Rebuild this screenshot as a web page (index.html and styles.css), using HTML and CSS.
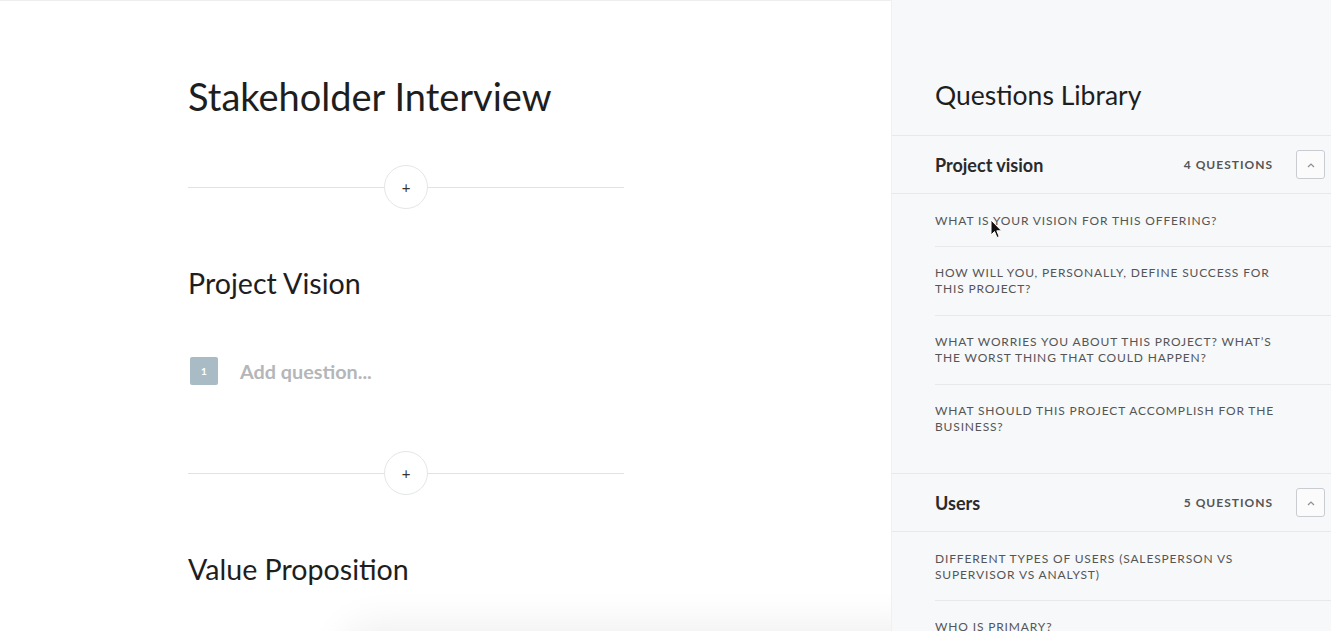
FILE: index.html
```html
<!DOCTYPE html>
<html lang="en">
<head>
<meta charset="utf-8">
<title>Stakeholder Interview</title>
<link rel="stylesheet" href="styles.css">
</head>
<body>
<div class="app">
  <main class="editor">
    <h1 class="doc-title">Stakeholder Interview</h1>
    <div class="divider divider-first"><span class="line"></span><button class="add-btn">+</button><span class="line"></span></div>
    <h2 class="section-title">Project Vision</h2>
    <div class="question-row">
      <span class="q-num">1</span>
      <span class="q-placeholder">Add question...</span>
    </div>
    <div class="divider divider-second"><span class="line"></span><button class="add-btn">+</button><span class="line"></span></div>
    <h2 class="section-title section-title-last">Value Proposition</h2>
    <div class="floating-shadow"></div>
  </main>
  <aside class="library">
    <h2 class="lib-title">Questions Library</h2>
    <section class="lib-section">
      <div class="lib-head">
        <span class="lib-name">Project vision</span>
        <span class="lib-count">4 QUESTIONS</span>
        <button class="collapse-btn"><svg width="10" height="6" viewBox="0 0 10 6"><path d="M2 5 L5 2 L8 5" fill="none" stroke="#8a9096" stroke-width="1.2"/></svg></button>
      </div>
      <ul class="lib-list">
        <li>WHAT IS YOUR VISION FOR THIS OFFERING?</li>
        <li>HOW WILL YOU, PERSONALLY, DEFINE SUCCESS FOR THIS PROJECT?</li>
        <li>WHAT WORRIES YOU ABOUT THIS PROJECT? WHAT’S THE WORST THING THAT COULD HAPPEN?</li>
        <li>WHAT SHOULD THIS PROJECT ACCOMPLISH FOR THE BUSINESS?</li>
      </ul>
    </section>
    <section class="lib-section">
      <div class="lib-head">
        <span class="lib-name">Users</span>
        <span class="lib-count">5 QUESTIONS</span>
        <button class="collapse-btn"><svg width="10" height="6" viewBox="0 0 10 6"><path d="M2 5 L5 2 L8 5" fill="none" stroke="#8a9096" stroke-width="1.2"/></svg></button>
      </div>
      <ul class="lib-list">
        <li>DIFFERENT TYPES OF USERS (SALESPERSON VS SUPERVISOR VS ANALYST)</li>
        <li>WHO IS PRIMARY?</li>
      </ul>
    </section>
    <svg class="cursor" width="14" height="20" viewBox="0 0 14 20"><path d="M1 1 L1 16 L4.5 12.5 L7 18.5 L9.2 17.6 L6.8 11.8 L11.5 11.8 Z" fill="#111" stroke="#fff" stroke-width="1"/></svg>
  </aside>
</div>
</body>
</html>
```
FILE: styles.css
```css
* { box-sizing: border-box; }
html, body { margin: 0; padding: 0; }
body {
  font-family: Lato, "Open Sans", sans-serif;
  background: #ffffff;
  color: #222;
  width: 1331px;
  height: 631px;
  overflow: hidden;
}
.app {
  display: flex;
  height: 631px;
}
.editor {
  position: relative;
  width: 891px;
  flex: none;
  padding: 73px 0 0 188px;
  border-top: 1px solid #eceef0;
  overflow: hidden;
}
.doc-title {
  margin: 0;
  font-size: 38px;
  font-weight: 400;
  line-height: 44px;
  color: #1e1e1e;
}
.divider {
  display: flex;
  align-items: center;
  width: 436px;
  height: 44px;
}
.divider-first { margin-top: 47px; }
.divider-second { margin-top: 66px; }
.divider .line {
  flex: 1;
  height: 1px;
  background: #dde3e7;
}
.add-btn {
  width: 44px;
  height: 44px;
  border-radius: 50%;
  border: 1px solid #e3e6e8;
  background: #fff;
  font-family: Lato, sans-serif;
  font-size: 15px;
  color: #333;
  padding: 0;
  line-height: 1;
}
.section-title {
  margin: 57px 0 0;
  font-size: 28.6px;
  font-weight: 400;
  line-height: 34px;
  color: #1e1e1e;
}
.question-row {
  display: flex;
  align-items: center;
  margin-top: 57px;
  margin-left: 2px;
  height: 28px;
}
.q-num {
  width: 28px;
  height: 28px;
  border-radius: 2px;
  background: #a9bcc5;
  color: #fff;
  font-size: 10px;
  font-weight: 700;
  display: flex;
  align-items: center;
  justify-content: center;
}
.q-placeholder {
  margin-left: 22px;
  font-size: 19.8px;
  font-weight: 700;
  color: #b4b6b8;
}
.floating-shadow {
  position: absolute;
  left: 350px;
  bottom: -50px;
  width: 580px;
  height: 50px;
  border-radius: 20px;
  box-shadow: 0 0 40px 6px rgba(0,0,0,0.07);
}
.library {
  position: relative;
  flex: 1;
  background: #f7f8fa;
  border-left: 1px solid #eef0f2;
  overflow: hidden;
}
.lib-title {
  margin: 0;
  padding: 79px 0 24px 43px;
  font-size: 26.5px;
  font-weight: 400;
  line-height: 32px;
  color: #1e1e1e;
  border-bottom: 1px solid #e6e8eb;
}
.lib-section {
  border-bottom: 1px solid #e6e8eb;
  padding-bottom: 20px;
}
.lib-head {
  display: flex;
  align-items: center;
  height: 58px;
  padding: 0 6px 0 43px;
  border-bottom: 1px solid #e6e8eb;
}
.lib-name {
  flex: 1;
  font-size: 18px;
  font-weight: 700;
  color: #2a2a2a;
}
.lib-count {
  font-size: 12px;
  font-weight: 700;
  letter-spacing: 1px;
  color: #555;
  margin-right: 23px;
}
.collapse-btn {
  width: 29px;
  height: 29px;
  border: 1px solid #c9cdd1;
  border-radius: 3px;
  background: #fbfbfc;
  padding: 0;
  display: flex;
  align-items: center;
  justify-content: center;
}
.lib-list {
  list-style: none;
  margin: 0;
  padding: 0 0 0 43px;
}
.lib-list li {
  padding: 18px 41px 18px 0;
  font-size: 12px;
  line-height: 16px;
  letter-spacing: 0.85px;
  color: #555;
  border-bottom: 1px solid #e6e8eb;
}
.lib-list li:first-child { padding-top: 19px; padding-bottom: 17px; }
.lib-list li:last-child { border-bottom: none; }
.cursor {
  position: absolute;
  left: 98px;
  top: 219px;
}
```
